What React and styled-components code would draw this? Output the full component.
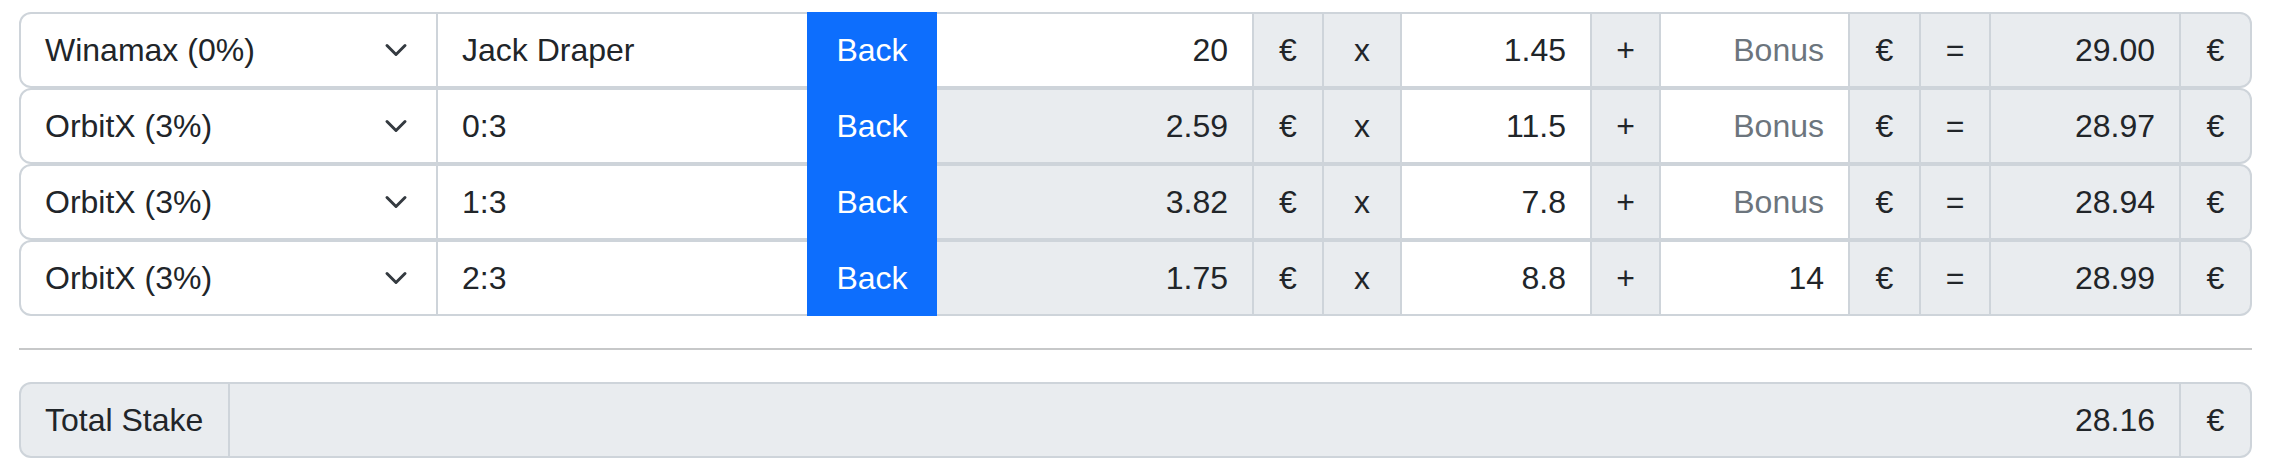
import React from "react";
import styled, { createGlobalStyle, css } from "styled-components";

const GlobalStyle = createGlobalStyle`
  *, *::before, *::after { box-sizing: border-box; }
  body {
    margin: 0;
    background: #fff;
    color: #212529;
    font-family: "Liberation Sans", Arial, sans-serif;
    font-size: 32px;
    line-height: 1.5;
  }
`;

const Page = styled.div`
  padding: 12px 20px 0 19px;
`;

const RowStack = styled.div`
  display: flex;
  flex-direction: column;
`;

const InputGroup = styled.div`
  display: flex;
  align-items: stretch;
  height: 76px;
  width: 100%;
`;

const cellBase = css`
  flex: 0 0 ${(p) => p.$w}px;
  width: ${(p) => p.$w}px;
  height: 76px;
  margin-left: -2px;
  border: 2px solid #ced4da;
  padding: 12px 24px;
  font-family: inherit;
  font-size: 32px;
  line-height: 1.5;
  color: #212529;
  &:first-child {
    margin-left: 0;
    border-top-left-radius: 12px;
    border-bottom-left-radius: 12px;
  }
  &:last-child {
    border-top-right-radius: 12px;
    border-bottom-right-radius: 12px;
  }
`;

const SelectBox = styled.div`
  ${cellBase}
  display: flex;
  align-items: center;
  justify-content: space-between;
  background: #fff;
  padding-right: 28px;
  white-space: nowrap;
`;

const Chevron = styled.svg`
  flex: 0 0 24px;
  width: 24px;
  height: 24px;
`;

const Field = styled.input`
  ${cellBase}
  min-width: 0;
  outline: none;
  appearance: none;
  background: ${(p) => (p.$muted ? "#e9ecef" : "#fff")};
  text-align: ${(p) => (p.$end ? "right" : "left")};
  &::placeholder {
    color: #6c757d;
    opacity: 1;
  }
`;

const BackButton = styled.button`
  ${cellBase}
  position: relative;
  z-index: 2;
  background: #0d6efd;
  border-color: #0d6efd;
  color: #fff;
  text-align: center;
  padding: 12px 0;
  cursor: pointer;
`;

const Addon = styled.span`
  ${cellBase}
  display: flex;
  align-items: center;
  justify-content: ${(p) => (p.$start ? "flex-start" : "center")};
  background: #e9ecef;
  white-space: nowrap;
  padding: 12px ${(p) => (p.$start ? "24px" : "0")};
`;

const Divider = styled.hr`
  margin: 32px 0;
  border: 0;
  border-top: 2px solid #212529;
  opacity: 0.25;
  color: #212529;
`;

const ChevronIcon = () => (
  <Chevron viewBox="0 0 16 16" aria-hidden="true">
    <path
      d="m2 5 6 6 6-6"
      fill="none"
      stroke="#343a40"
      strokeWidth="2"
      strokeLinecap="round"
      strokeLinejoin="round"
    />
  </Chevron>
);

const W = [419, 373, 130, 319, 72, 80, 192, 71, 191, 73, 72, 192, 73];

const rows = [
  { book: "Winamax (0%)", sel: "Jack Draper", stake: "20", stakeMuted: false, odds: "1.45", bonus: "", result: "29.00" },
  { book: "OrbitX (3%)", sel: "0:3", stake: "2.59", stakeMuted: true, odds: "11.5", bonus: "", result: "28.97" },
  { book: "OrbitX (3%)", sel: "1:3", stake: "3.82", stakeMuted: true, odds: "7.8", bonus: "", result: "28.94" },
  { book: "OrbitX (3%)", sel: "2:3", stake: "1.75", stakeMuted: true, odds: "8.8", bonus: "14", result: "28.99" },
];

const BetRow = ({ r }) => (
  <InputGroup>
    <SelectBox $w={W[0]}>
      <span>{r.book}</span>
      <ChevronIcon />
    </SelectBox>
    <Field $w={W[1]} type="text" readOnly value={r.sel} />
    <BackButton $w={W[2]} type="button">Back</BackButton>
    <Field $w={W[3]} $end $muted={r.stakeMuted} type="text" readOnly value={r.stake} />
    <Addon $w={W[4]}>€</Addon>
    <Addon $w={W[5]}>x</Addon>
    <Field $w={W[6]} $end type="text" readOnly value={r.odds} />
    <Addon $w={W[7]}>+</Addon>
    <Field $w={W[8]} $end type="text" readOnly placeholder="Bonus" value={r.bonus} />
    <Addon $w={W[9]}>€</Addon>
    <Addon $w={W[10]}>=</Addon>
    <Field $w={W[11]} $end $muted type="text" readOnly value={r.result} />
    <Addon $w={W[12]}>€</Addon>
  </InputGroup>
);

export default function App() {
  return (
    <>
      <GlobalStyle />
      <Page>
        <RowStack>
          {rows.map((r, i) => (
            <BetRow key={i} r={r} />
          ))}
        </RowStack>
        <Divider />
        <InputGroup>
          <Addon $w={211} $start>Total Stake</Addon>
          <Field $w={1953} $end $muted type="text" readOnly value="28.16" />
          <Addon $w={73}>€</Addon>
        </InputGroup>
      </Page>
    </>
  );
}
